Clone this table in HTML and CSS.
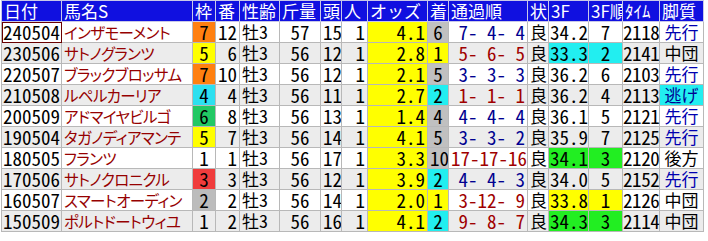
FILE: index.html
```html
<!DOCTYPE html>
<html lang="ja">
<head>
<meta charset="utf-8">
<title>成績</title>
<link rel="stylesheet" href="styles.css">
</head>
<body>
<table class="grid">
<colgroup>
<col class="c-date"><col class="c-name"><col class="c-waku"><col class="c-ban"><col class="c-sei"><col class="c-kin"><col class="c-tou"><col class="c-nin"><col class="c-odds"><col class="c-chaku"><col class="c-tsuka"><col class="c-jou"><col class="c-3f"><col class="c-3fj"><col class="c-time"><col class="c-kyaku">
</colgroup>
<thead>
<tr><th>日付</th><th>馬名S</th><th>枠</th><th>番</th><th>性齢</th><th>斤量</th><th>頭</th><th>人</th><th>オッズ</th><th>着</th><th>通過順</th><th>状</th><th>3F</th><th>3F順</th><th>ﾀｲﾑ</th><th>脚質</th></tr>
</thead>
<tbody>
<tr><td class="n l sel">240504</td><td class="nm">インザモーメント</td><td class="n c w7">7</td><td class="n r">12</td><td class="sx">牡<span class="d">3</span></td><td class="n c">57</td><td class="n r">15</td><td class="n r">1</td><td class="n r odds">4.1</td><td class="n c gray">6</td><td class="n r tk navy"> 7- 4- 4</td><td class="c">良</td><td class="n l">34.2</td><td class="n c">7</td><td class="n l tm">2118</td><td class="c blue">先行</td></tr>
<tr><td class="n l">230506</td><td class="nm">サトノグランツ</td><td class="n c w5">5</td><td class="n r">6</td><td class="sx">牡<span class="d">3</span></td><td class="n c">56</td><td class="n r">12</td><td class="n r">1</td><td class="n r odds">2.8</td><td class="n c yel">1</td><td class="n r tk red"> 5- 6- 5</td><td class="c">良</td><td class="n l cya">33.3</td><td class="n c cya">2</td><td class="n l tm">2141</td><td class="c">中団</td></tr>
<tr><td class="n l">220507</td><td class="nm">ブラックブロッサム</td><td class="n c w7">7</td><td class="n r">10</td><td class="sx">牡<span class="d">3</span></td><td class="n c">56</td><td class="n r">12</td><td class="n r">1</td><td class="n r odds">2.1</td><td class="n c gray">5</td><td class="n r tk navy"> 3- 3- 3</td><td class="c">良</td><td class="n l">36.2</td><td class="n c">6</td><td class="n l tm">2103</td><td class="c blue">先行</td></tr>
<tr><td class="n l">210508</td><td class="nm">ルペルカーリア</td><td class="n c w4">4</td><td class="n r">4</td><td class="sx">牡<span class="d">3</span></td><td class="n c">56</td><td class="n r">11</td><td class="n r">1</td><td class="n r odds">2.7</td><td class="n c cya">2</td><td class="n r tk red"> 1- 1- 1</td><td class="c">良</td><td class="n l">36.2</td><td class="n c">4</td><td class="n l tm">2113</td><td class="c cya navy">逃げ</td></tr>
<tr><td class="n l">200509</td><td class="nm">アドマイヤビルゴ</td><td class="n c w6">6</td><td class="n r">8</td><td class="sx">牡<span class="d">3</span></td><td class="n c">56</td><td class="n r">13</td><td class="n r">1</td><td class="n r odds">1.4</td><td class="n c gray">4</td><td class="n r tk navy"> 4- 4- 4</td><td class="c">良</td><td class="n l">36.1</td><td class="n c">5</td><td class="n l tm">2121</td><td class="c blue">先行</td></tr>
<tr><td class="n l">190504</td><td class="nm">タガノディアマンテ</td><td class="n c w5">5</td><td class="n r">7</td><td class="sx">牡<span class="d">3</span></td><td class="n c">56</td><td class="n r">14</td><td class="n r">1</td><td class="n r odds">4.1</td><td class="n c gray">5</td><td class="n r tk navy"> 3- 3- 2</td><td class="c">良</td><td class="n l">35.9</td><td class="n c">7</td><td class="n l tm">2125</td><td class="c blue">先行</td></tr>
<tr><td class="n l">180505</td><td class="nm">フランツ</td><td class="n c">1</td><td class="n r">1</td><td class="sx">牡<span class="d">3</span></td><td class="n c">56</td><td class="n r">17</td><td class="n r">1</td><td class="n r odds">3.3</td><td class="n c gray">10</td><td class="n r tk red">17-17-16</td><td class="c">良</td><td class="n l grn">34.1</td><td class="n c grn">3</td><td class="n l tm">2120</td><td class="c">後方</td></tr>
<tr><td class="n l">170506</td><td class="nm">サトノクロニクル</td><td class="n c w3">3</td><td class="n r">3</td><td class="sx">牡<span class="d">3</span></td><td class="n c">56</td><td class="n r">12</td><td class="n r">1</td><td class="n r odds">3.9</td><td class="n c cya">2</td><td class="n r tk navy"> 4- 4- 3</td><td class="c">良</td><td class="n l">34.0</td><td class="n c">5</td><td class="n l tm">2152</td><td class="c blue">先行</td></tr>
<tr><td class="n l">160507</td><td class="nm">スマートオーディン</td><td class="n c w2">2</td><td class="n r">2</td><td class="sx">牡<span class="d">3</span></td><td class="n c">56</td><td class="n r">14</td><td class="n r">1</td><td class="n r odds">2.0</td><td class="n c yel">1</td><td class="n r tk red"> 3-12- 9</td><td class="c">良</td><td class="n l yel">33.8</td><td class="n c yel">1</td><td class="n l tm">2126</td><td class="c">中団</td></tr>
<tr><td class="n l">150509</td><td class="nm">ポルトドートウィユ</td><td class="n c">1</td><td class="n r">2</td><td class="sx">牡<span class="d">3</span></td><td class="n c">56</td><td class="n r">16</td><td class="n r">1</td><td class="n r odds">4.1</td><td class="n c cya">2</td><td class="n r tk red"> 9- 8- 7</td><td class="c">良</td><td class="n l grn">34.3</td><td class="n c grn">3</td><td class="n l tm">2114</td><td class="c">中団</td></tr>
</tbody>
</table>
</body>
</html>
```
FILE: styles.css
```css
body {
  margin: 0;
  background: #ffffff;
  font-family: "Noto Sans CJK JP", "Noto Sans", sans-serif;
  color: #000;
}

.grid {
  border-collapse: collapse;
  table-layout: fixed;
  width: 702px;
  margin-left: 1px;
}

.c-date { width: 60px; }
.c-name { width: 131px; }
.c-waku { width: 23px; }
.c-ban { width: 24px; }
.c-sei { width: 40px; }
.c-kin { width: 41px; }
.c-tou { width: 21px; }
.c-nin { width: 26px; }
.c-odds { width: 60px; }
.c-chaku { width: 21px; }
.c-tsuka { width: 79px; }
.c-jou { width: 21px; }
.c-3f { width: 40px; }
.c-3fj { width: 34px; }
.c-time { width: 37px; }
.c-kyaku { width: 44px; }

.grid tr {
  height: 21px;
}

.grid th,
.grid td {
  border: 1px solid #b8b8b8;
  height: 20px;
  padding: 0 2px;
  line-height: 20px;
  font-size: 17px;
  white-space: nowrap;
  overflow: hidden;
  font-weight: normal;
  vertical-align: middle;
}

.grid th {
  background: #1010e0;
  color: #ffffff;
  text-align: left;
  border-color: #c8c8e8;
}

.grid tbody tr:nth-child(even) td {
  background-color: #ececec;
}

.n {
  font-size: 19px !important;
  font-feature-settings: "hwid";
}

.l { text-align: left; padding-left: 1px !important; }
.c { text-align: center; }
.r { text-align: right; }

.nm {
  color: #960000;
  font-size: 15.5px !important;
  font-feature-settings: "palt";
  letter-spacing: -0.6px;
}

.tm {
  padding: 0 !important;
  letter-spacing: -0.4px;
  overflow: visible !important;
}

.sx .d {
  font-size: 18px;
  line-height: 0;
  font-feature-settings: "hwid";
}

.tk { white-space: pre; }

.sel { outline: 1px solid #6a0000; outline-offset: -1px; }

.navy { color: #000090; }
.red { color: #a00000; }
.blue { color: #0000b0; }

.grid tbody tr td.odds { background-color: #ffff00; }
.grid tbody tr td.gray { background-color: #c0c0c0; }
.grid tbody tr td.yel { background-color: #ffff00; }
.grid tbody tr td.cya { background-color: #22eef0; }
.grid tbody tr td.grn { background-color: #22ee22; }

.grid tbody tr td.w2 { background-color: #bcbcbc; }
.grid tbody tr td.w3 { background-color: #f03c3c; }
.grid tbody tr td.w4 { background-color: #2ce0f0; }
.grid tbody tr td.w5 { background-color: #ffff00; }
.grid tbody tr td.w6 { background-color: #22c864; }
.grid tbody tr td.w7 { background-color: #ff8010; }
```
